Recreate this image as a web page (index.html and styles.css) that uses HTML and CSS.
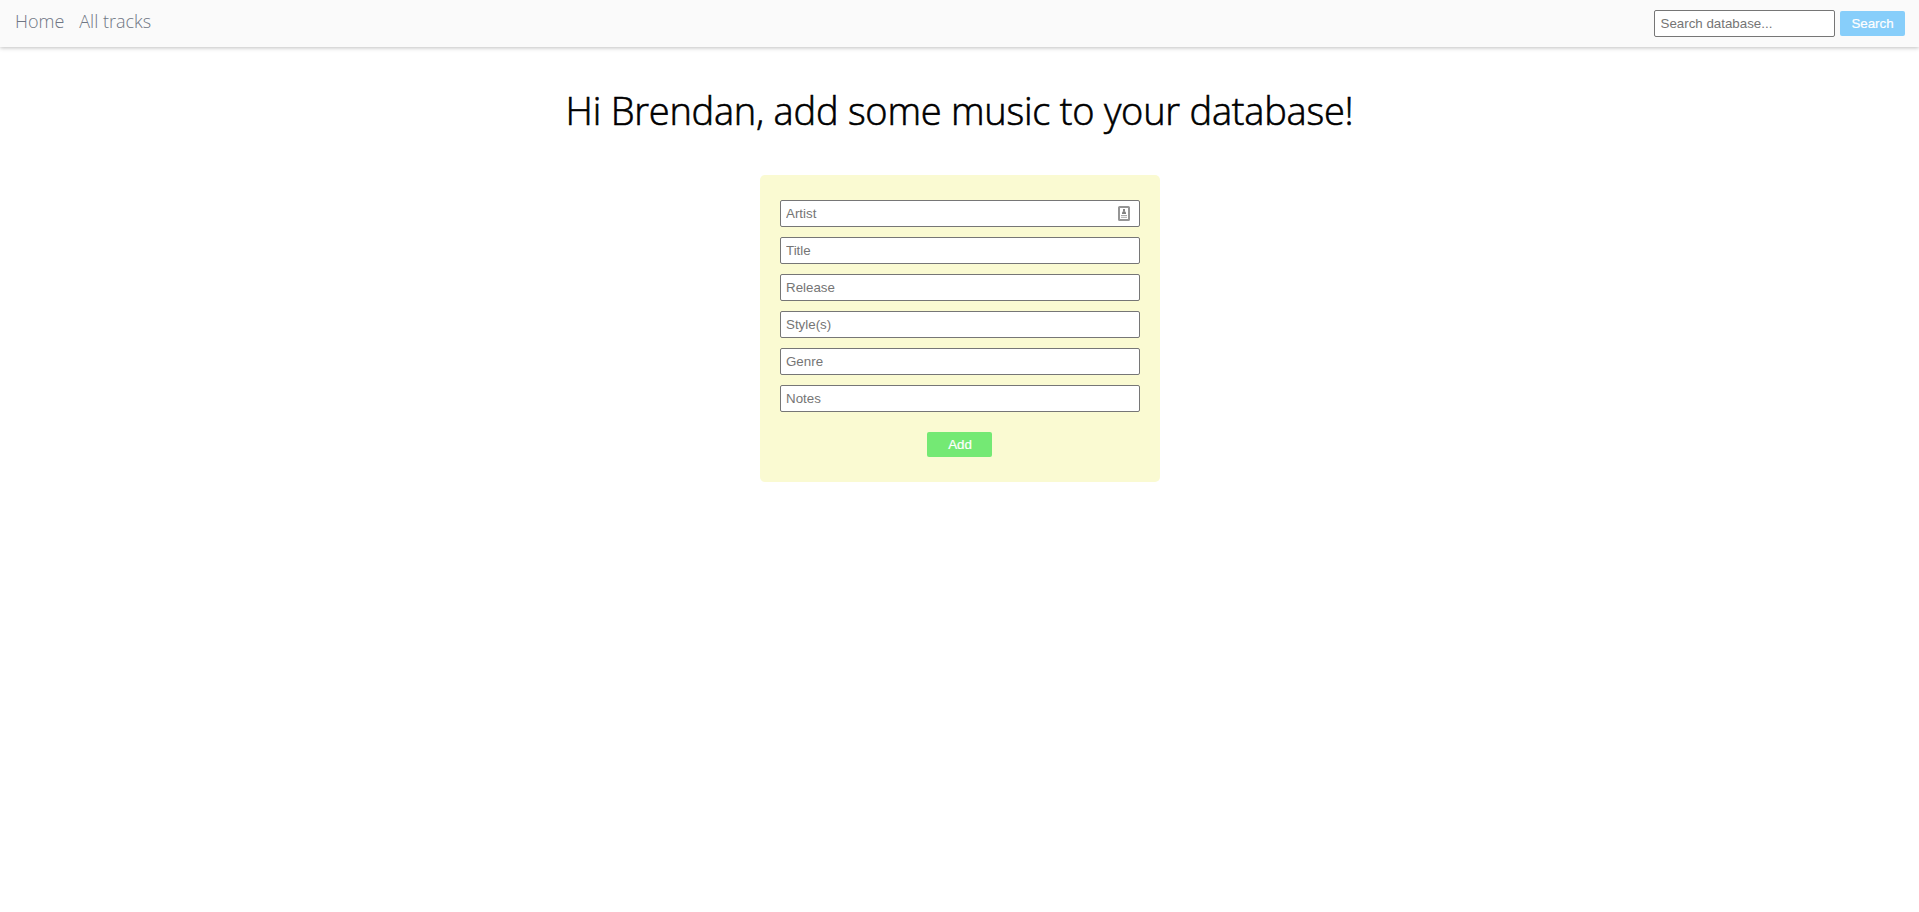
FILE: index.html
```html
<!DOCTYPE html>
<html lang="en">
<head>
<meta charset="utf-8">
<title>Music database</title>
<link rel="stylesheet" href="styles.css">
</head>
<body>
<nav class="navbar">
  <div class="links">
    <a class="link" href="#">Home</a>
    <a class="link" href="#">All tracks</a>
  </div>
  <form class="search">
    <input class="field search-field" type="text" placeholder="Search database...">
    <button class="btn btn-search" type="button">Search</button>
  </form>
</nav>
<main class="page">
  <h1 class="title">Hi Brendan, add some music to your database!</h1>
  <form class="card">
    <div class="autofill">
      <input class="field" type="text" placeholder="Artist">
      <svg class="autofill-icon" width="12" height="15" viewBox="0 0 12 15">
        <rect x="1" y="1" width="10" height="13" rx="0.6" fill="#fff" stroke="#959595" stroke-width="2"/>
        <rect x="5" y="3" width="2" height="2.4" fill="#858585"/>
        <path d="M4 8V6.4L5 5.2H7L8 6.4V8Z" fill="#808080"/>
        <path d="M3 9.5H9M3 11.3H9" stroke="#aaa" stroke-width="1"/>
      </svg>
    </div>
    <input class="field" type="text" placeholder="Title">
    <input class="field" type="text" placeholder="Release">
    <input class="field" type="text" placeholder="Style(s)">
    <input class="field" type="text" placeholder="Genre">
    <input class="field" type="text" placeholder="Notes">
    <button class="btn btn-add" type="button">Add</button>
  </form>
</main>
</body>
</html>
```
FILE: styles.css
```css
* { box-sizing: border-box; }

body {
  margin: 0;
  background: #fff;
  font-family: "Open Sans", sans-serif;
}

.navbar {
  display: flex;
  justify-content: space-between;
  height: 47px;
  padding: 0 14px 0 15px;
  background: #fafafa;
  box-shadow: 0 1px 4px rgba(0, 0, 0, 0.25);
}

.links {
  display: flex;
  gap: 15px;
  padding-top: 9px;
}

.link {
  color: #6f7684;
  font-size: 18px;
  font-weight: 300;
  line-height: 25px;
  text-decoration: none;
}

.search {
  display: flex;
  align-items: center;
  gap: 5px;
}

.field {
  display: block;
  width: 100%;
  height: 27px;
  padding: 0 5.5px;
  border: 1px solid #767676;
  border-radius: 2px;
  background: #fff;
  font-family: "Liberation Sans", Arial, sans-serif;
  font-size: 13.333px;
}

.field::placeholder { color: #757575; }

.search-field { width: 181px; }

.btn {
  width: 65px;
  height: 25px;
  padding: 0;
  border: 0;
  border-radius: 2px;
  color: #fff;
  font-family: "Liberation Sans", Arial, sans-serif;
  font-size: 13.333px;
  -webkit-text-stroke: 0.2px #fff;
}

.btn-search { background: #87cefa; }

.btn-add {
  margin-top: 10px;
  padding-left: 1px;
  background: #74e974;
}

.title {
  margin: 36px 0 37px;
  color: #000;
  font-size: 38px;
  font-weight: 300;
  letter-spacing: -0.24px;
  line-height: 55px;
  text-align: center;
  -webkit-text-stroke: 0.6px #000;
}

.card {
  display: flex;
  flex-direction: column;
  align-items: center;
  gap: 10px;
  width: 400px;
  margin: 0 auto;
  padding: 25px 20px;
  border-radius: 5px;
  background: #fafad2;
}

.autofill {
  position: relative;
  width: 100%;
}

.autofill-icon {
  position: absolute;
  top: 6px;
  right: 10px;
}
```
